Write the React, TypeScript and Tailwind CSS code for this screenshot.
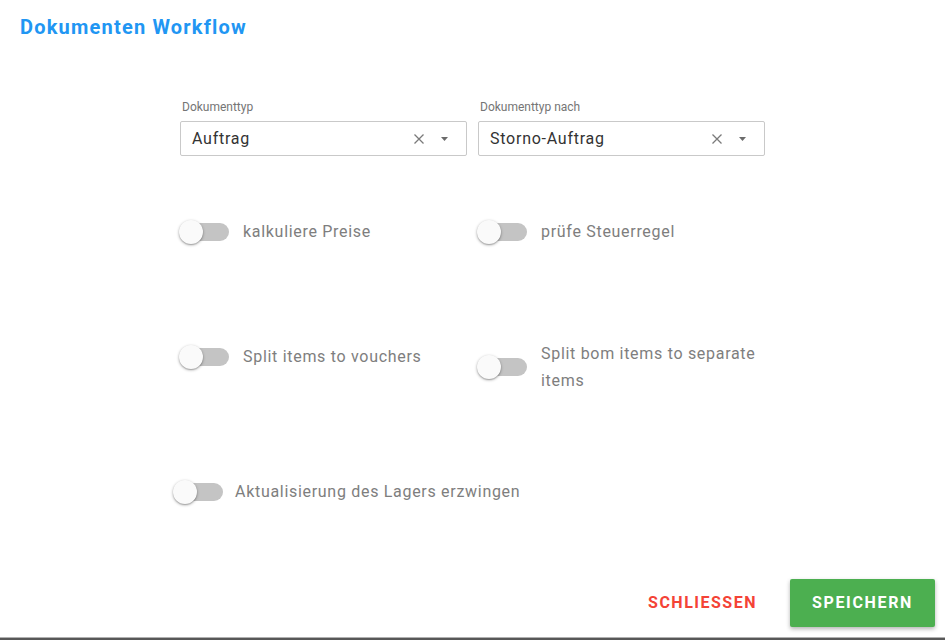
import React from "react";

function Switch({ className = "" }: { className?: string }) {
  return (
    <div className={"relative w-[50px] h-[24px] shrink-0 " + className}>
      <div className="absolute left-[5px] top-[3px] w-[45px] h-[18px] rounded-full bg-[#c4c4c4]" />
      <div className="absolute left-0 top-0 w-[24px] h-[24px] rounded-full bg-[#fafafa] shadow-[0_1px_3px_rgba(0,0,0,0.35),0_1px_1px_rgba(0,0,0,0.14)]" />
    </div>
  );
}

function ToggleItem({
  label,
  className = "",
  labelClass = "ml-[14px]",
}: {
  label: string;
  className?: string;
  labelClass?: string;
}) {
  return (
    <div className={"flex items-center " + className}>
      <Switch className="-ml-px" />
      <span className={"text-[16px] leading-[27px] tracking-[0.7px] text-[#7e7e7e] " + labelClass}>{label}</span>
    </div>
  );
}

function SelectField({ label, value }: { label: string; value: string }) {
  return (
    <div className="flex flex-col">
      <span className="text-[12px] leading-[14px] text-[#757575] pl-[2px]">{label}</span>
      <div className="mt-[7px] h-[35px] border border-[#c9c9c9] rounded-[2px] flex items-center pl-[11px] pr-[18px] bg-white">
        <span className="flex-1 text-[16px] tracking-[0.75px] text-[#333333]">{value}</span>
        <svg width="12" height="12" viewBox="0 0 12 12" className="mr-[16px]">
          <path d="M1.5 1.5 L10.5 10.5 M10.5 1.5 L1.5 10.5" stroke="#7a7a7a" strokeWidth="1.3" fill="none" />
        </svg>
        <svg width="7" height="4" viewBox="0 0 7 4">
          <path d="M0 0 L7 0 L3.5 4 Z" fill="#6b6b6b" />
        </svg>
      </div>
    </div>
  );
}

export default function App() {
  return (
    <div
      className="w-full h-[640px] bg-white flex flex-col"
      style={{ fontFamily: "Roboto, 'Noto Sans', sans-serif" }}
    >
      <div className="pl-[20px] pt-[13px] text-[20px] leading-[28px] font-bold tracking-[1.2px] text-[#2196f3]">
        Dokumenten Workflow
      </div>

      <div className="w-[585px] mx-auto mt-[59px]">
        <div className="grid grid-cols-2 gap-x-[11px]">
          <SelectField label="Dokumenttyp" value="Auftrag" />
          <SelectField label="Dokumenttyp nach" value="Storno-Auftrag" />
        </div>

        <div className="grid grid-cols-2 gap-x-[11px] mt-[62px] items-start">
          <ToggleItem label="kalkuliere Preise" />
          <ToggleItem label="prüfe Steuerregel" />
        </div>

        <div className="grid grid-cols-2 gap-x-[11px] mt-[95px] items-start">
          <ToggleItem label="Split items to vouchers" className="mt-[3px]" />
          <ToggleItem label="Split bom items to separate items" labelClass="ml-[14px] pr-[8px]" />
        </div>

        <div className="mt-[84px]">
          <ToggleItem label="Aktualisierung des Lagers erzwingen" className="-ml-[6px]" labelClass="ml-[12px]" />
        </div>
      </div>

      <div className="flex-1" />

      <div className="flex items-center justify-end pr-[10px]">
        <button className="h-[48px] px-[16px] mr-[17px] text-[16px] font-bold text-[#f44336] tracking-[1.5px]">
          SCHLIESSEN
        </button>
        <button className="h-[48px] w-[145px] rounded-[2px] bg-[#4caf50] text-white text-[16px] font-bold tracking-[1.65px] shadow-[0_2px_4px_rgba(0,0,0,0.3)]">
          SPEICHERN
        </button>
      </div>

      <div className="mt-[10px] h-[3px] border-t border-[#b0b0b0] bg-[#585858]" />
    </div>
  );
}
